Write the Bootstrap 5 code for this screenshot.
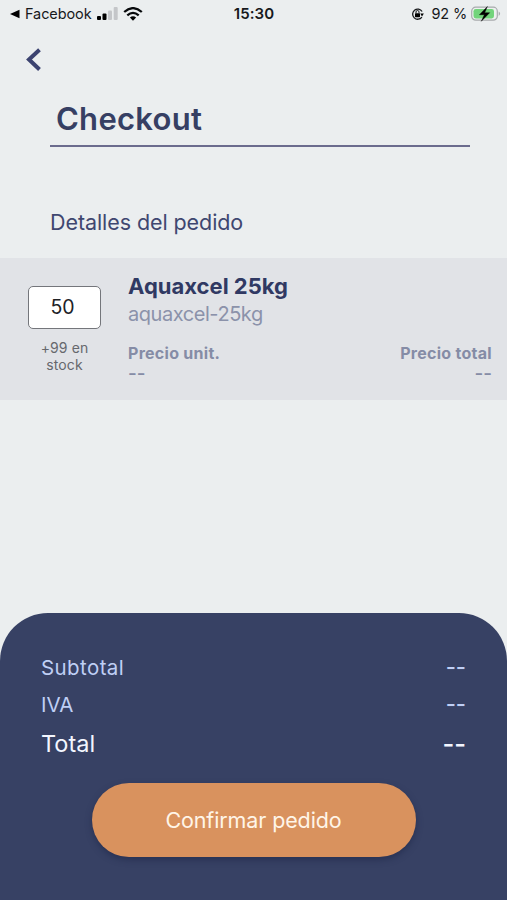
<!DOCTYPE html>
<html lang="es">
<head>
<meta charset="utf-8">
<meta name="viewport" content="width=device-width, initial-scale=1">
<title>Checkout</title>
<link href="https://cdn.jsdelivr.net/npm/bootstrap@5.3.0/dist/css/bootstrap.min.css" rel="stylesheet">
<style>
body{background:#ebeeef;font-family:Inter,"Liberation Sans",sans-serif;color:#363f63;height:900px;overflow:hidden}
svg{display:block;flex:none}
.statusbar{height:28px;font:15px/28px Inter,"Liberation Sans",sans-serif;color:#17191c;padding:0 6px 0 9px}
.statusbar>div{flex:1 1 0}
.clock{font-weight:600;letter-spacing:.1px;margin-right:2px}
.carrier{font-size:14.5px;letter-spacing:-.1px;margin:0 5px 0 5px}
.charge{font-size:14.5px;letter-spacing:-.15px;margin:0 4px 0 7px}
.back{height:62px;padding:20px 0 0 26px}
.heading{margin:0 37px 0 50px;height:57px;border-bottom:2px solid #6b6b8d;padding-left:6px;font-size:31px;font-weight:600;line-height:57px;letter-spacing:.28px}
.subheading{margin:58px 0 0 50px;height:53px;font-size:21.5px;line-height:34px;letter-spacing:-.08px;color:#3f4770}
.product{height:142px;background:#e1e3e7}
.qtycol{width:73px;margin:28px 27px 0 28px}
.qty{height:43px;border:1px solid #74767b;border-radius:5px;background:#fff;color:#202126;font-size:19.5px;line-height:40px;padding-right:4px}
.stock{font-size:14px;line-height:17px;color:#66686d;margin-top:10px;letter-spacing:.1px}
.info{padding:14px 15px 0 0}
.pname{font-size:22px;line-height:28px;font-weight:700;color:#303963}
.sku{font-size:20px;line-height:28px;color:#8b92aa;letter-spacing:-.45px}
.prices{margin-top:14px;font-size:16px;line-height:22px;color:#858ca6}
.prices b{letter-spacing:.28px}
.prices .dash{font-weight:500;font-size:19px;line-height:20px}
.summary{margin-top:213px;height:288px;background:#374164;border-radius:48px 48px 0 0;padding:36px 41px 0;color:#bfcff5;font-size:20.5px;line-height:37px}
.label{letter-spacing:.4px}
.summary .dash{font-size:22px;font-weight:500;line-height:37px}
.total{color:#f3f6ff;font-size:23.5px;line-height:41px}
.summary .total .dash{font-size:25.5px;line-height:41px}
.confirm,.confirm:hover{width:324px;height:74px;margin-top:19px;border:0;border-radius:37px;background:#d9925e;color:#fff5e8;font-size:21.5px;letter-spacing:-.12px;box-shadow:0 3px 6px #20284a99}
</style>
</head>
<body>
<header class="statusbar d-flex align-items-center">
 <div class="d-flex align-items-center">
  <svg width="11" height="10" viewBox="0 0 11 10"><path d="M1 5 10.5.8v8.4z"/></svg>
  <span class="carrier">Facebook</span>
  <svg width="22" height="14" viewBox="0 0 22 14"><rect x="0" y="9" width="4" height="4" rx="1"/><rect x="5.5" y="6.5" width="4" height="6.5" rx="1"/><g fill="#c4c6c9"><rect x="11" y="3.5" width="4" height="9.5" rx="1"/><rect x="16.7" y="0" width="4" height="13" rx="1"/></g></svg>
  <svg class="ms-1" width="20" height="14" viewBox="0 0 20 14"><g fill="none" stroke="#080a0c" stroke-width="2.3"><path d="M1.2 5Q10-2.7 18.8 5M4.3 8.3Q10 3.4 15.7 8.3"/></g><path d="M6.9 10.5Q10 8 13.1 10.5L10 13.7z"/></svg>
 </div>
 <span class="clock">15:30</span>
 <div class="d-flex align-items-center justify-content-end">
  <svg width="13" height="14" viewBox="0 0 13 14"><path d="M10.9 10.1A5.1 5.1 0 1 1 11.1 4.5" fill="none" stroke="#17191c" stroke-width="1.3"/><path d="m9.3 6.4h3.6L11 9.4z"/><rect x="4" y="6.2" width="5" height="4" rx=".6"/><path d="M5 6.5V5a1.5 1.5 0 0 1 3 0v1.5" fill="none" stroke="#17191c"/></svg>
  <span class="charge">92 %</span>
  <svg width="30" height="16" viewBox="0 0 30 16"><rect x=".7" y="1.2" width="25.6" height="13" rx="4" fill="#edf0ef" stroke="#a8abad" stroke-width="1.2"/><rect x="2.5" y="3" width="20.5" height="9.4" rx="2.3" fill="#72d47b"/><path d="M27.7 5.5q2.8 2.2 0 4.4z" fill="#a8abad"/><path d="m16.4.5-8 8.2h5L10.3 15.3l8.4-8.6h-5z" stroke="#000" stroke-width=".4"/></svg>
 </div>
</header>
<nav class="back"><svg width="16" height="24" viewBox="0 0 16 24"><path d="M13.5 1.8 3 11.5l10.5 10" fill="none" stroke="#3c4370" stroke-width="4"/></svg></nav>
<main>
 <h1 class="heading mb-0">Checkout</h1>
 <h2 class="subheading mb-0 fw-normal">Detalles del pedido</h2>
 <section class="product d-flex">
  <div class="qtycol text-center"><div class="qty">50</div><div class="stock">+99 en<br>stock</div></div>
  <div class="info flex-grow-1">
   <div class="pname">Aquaxcel 25kg</div>
   <div class="sku">aquaxcel-25kg</div>
   <div class="prices d-flex justify-content-between">
    <div><b>Precio unit.</b><div class="dash">--</div></div>
    <div class="text-end"><b>Precio total</b><div class="dash">--</div></div>
   </div>
  </div>
 </section>
</main>
<footer class="summary">
 <div class="d-flex justify-content-between"><span class="label">Subtotal</span><span class="dash">--</span></div>
 <div class="d-flex justify-content-between"><span>IVA</span><span class="dash">--</span></div>
 <div class="total d-flex justify-content-between"><span>Total</span><span class="dash">--</span></div>
 <div class="text-center"><button class="btn confirm">Confirmar pedido</button></div>
</footer>
<script src="https://cdn.jsdelivr.net/npm/bootstrap@5.3.0/dist/js/bootstrap.bundle.min.js"></script>
</body>
</html>
